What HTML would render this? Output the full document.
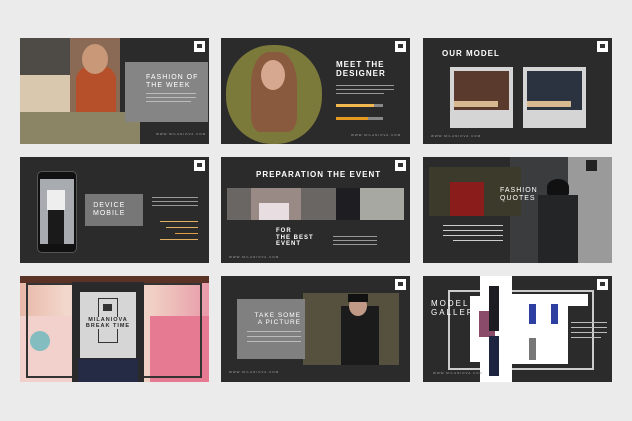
<!DOCTYPE html>
<html><head><meta charset="utf-8"><style>
*{margin:0;padding:0;box-sizing:border-box}
body{width:632px;height:421px;background:#ebebeb;position:relative;overflow:hidden;font-family:"Liberation Sans",sans-serif}
div{position:absolute}
.s{width:189px;height:106px;background:#2b2b2b;overflow:hidden}
.ic{width:11px;height:11px;background:#fff;top:3px;right:4px}
.ic:after{content:"";position:absolute;left:3px;top:3px;width:5px;height:4px;background:#333}
.t{color:#fff;font-weight:bold;letter-spacing:1px;line-height:1.1;white-space:nowrap}
.ln{height:1px;background:#999}
.url{color:#aaa;font-size:3px;letter-spacing:1px}
</style></head><body>

<!-- Slide 1 -->
<div class="s" style="left:20px;top:38px">
  <div style="left:0;top:0;width:50px;height:37px;background:#4e4a45"></div>
  <div style="left:0;top:37px;width:50px;height:37px;background:#d9c7ae"></div>
  <div style="left:50px;top:0;width:50px;height:74px;background:#8a6a55"></div>
  <div style="left:56px;top:28px;width:40px;height:46px;background:#b5502a;border-radius:14px 14px 0 0"></div>
  <div style="left:62px;top:6px;width:26px;height:30px;background:#c89878;border-radius:50%"></div>
  <div style="left:0;top:74px;width:120px;height:32px;background:#8b8566"></div>
  <div style="left:105px;top:24px;width:83px;height:60px;background:#858585"></div>
  <div class="t" style="left:126px;top:36px;font-size:7px;font-weight:normal">FASHION OF<br>THE WEEK</div>
  <div class="ln" style="left:126px;top:55px;width:50px;background:#bbb"></div>
  <div class="ln" style="left:126px;top:59px;width:50px;background:#bbb"></div>
  <div class="ln" style="left:126px;top:63px;width:45px;background:#bbb"></div>
  <div class="url" style="left:136px;top:94px">WWW.MILANIOVA.COM</div>
  <div class="ic"></div>
</div>

<!-- Slide 2 -->
<div class="s" style="left:221px;top:38px">
  <div style="left:5px;top:7px;width:96px;height:99px;background:#7c7a3a;border-radius:48%"></div>
  <div style="left:30px;top:14px;width:46px;height:80px;background:#8a5a3e;border-radius:40% 40% 20% 20%"></div>
  <div style="left:40px;top:22px;width:24px;height:30px;background:#d7a890;border-radius:50%"></div>
  <div class="t" style="left:115px;top:23px;font-size:8px">MEET THE<br>DESIGNER</div>
  <div class="ln" style="left:115px;top:47px;width:58px"></div>
  <div class="ln" style="left:115px;top:51px;width:58px"></div>
  <div class="ln" style="left:115px;top:55px;width:48px"></div>
  <div style="left:115px;top:66px;width:47px;height:3px;background:#888"></div>
  <div style="left:115px;top:66px;width:38px;height:3px;background:#f0b84e"></div>
  <div style="left:115px;top:79px;width:47px;height:3px;background:#888"></div>
  <div style="left:115px;top:79px;width:32px;height:3px;background:#e79a22"></div>
  <div class="url" style="left:130px;top:95px">WWW.MILANIOVA.COM</div>
  <div class="ic"></div>
</div>

<!-- Slide 3 -->
<div class="s" style="left:423px;top:38px">
  <div class="t" style="left:19px;top:12px;font-size:8px">OUR MODEL</div>
  <div style="left:27px;top:29px;width:63px;height:61px;background:#d5d5d5"></div>
  <div style="left:31px;top:33px;width:55px;height:39px;background:#5a3a2c"></div>
  <div style="left:31px;top:63px;width:44px;height:6px;background:#d8b890"></div>
  <div style="left:100px;top:29px;width:63px;height:61px;background:#d5d5d5"></div>
  <div style="left:104px;top:33px;width:55px;height:39px;background:#2c3340"></div>
  <div style="left:104px;top:63px;width:44px;height:6px;background:#d8b890"></div>
  <div class="url" style="left:8px;top:96px">WWW.MILANIOVA.COM</div>
  <div class="ic"></div>
</div>

<!-- Row 2 Slide 1 -->
<div class="s" style="left:20px;top:157px">
  <div style="left:17px;top:14px;width:40px;height:82px;background:#111;border:1px solid #555;border-radius:5px"></div>
  <div style="left:20px;top:22px;width:34px;height:65px;background:#a8abb0"></div>
  <div style="left:28px;top:40px;width:16px;height:47px;background:#1a1a1a"></div>
  <div style="left:27px;top:33px;width:18px;height:20px;background:#eee"></div>
  <div style="left:65px;top:37px;width:58px;height:32px;background:#777"></div>
  <div class="t" style="left:73px;top:45px;font-size:7px;font-weight:normal;text-align:center">DEVICE<br>MOBILE</div>
  <div class="ln" style="left:132px;top:40px;width:46px"></div>
  <div class="ln" style="left:132px;top:44px;width:46px"></div>
  <div class="ln" style="left:132px;top:48px;width:46px"></div>
  <div style="left:140px;top:64px;width:38px;height:1px;background:#e0b060"></div>
  <div style="left:146px;top:70px;width:32px;height:1px;background:#e0b060"></div>
  <div style="left:155px;top:76px;width:23px;height:1px;background:#e0a040"></div>
  <div style="left:140px;top:82px;width:38px;height:1px;background:#e0b060"></div>
  <div class="ic"></div>
</div>

<!-- Row 2 Slide 2 -->
<div class="s" style="left:221px;top:157px">
  <div class="t" style="left:35px;top:14px;font-size:8px">PREPARATION THE EVENT</div>
  <div style="left:6px;top:31px;width:177px;height:32px;background:#6a6664"></div>
  <div style="left:30px;top:31px;width:50px;height:32px;background:#9a8a85"></div>
  <div style="left:38px;top:46px;width:30px;height:17px;background:#e8dde0"></div>
  <div style="left:115px;top:31px;width:24px;height:32px;background:#1e1e22"></div>
  <div style="left:139px;top:31px;width:44px;height:32px;background:#a8a8a2"></div>
  <div class="t" style="left:55px;top:71px;font-size:6px">FOR<br>THE BEST<br>EVENT</div>
  <div class="ln" style="left:112px;top:79px;width:44px"></div>
  <div class="ln" style="left:112px;top:83px;width:44px"></div>
  <div class="ln" style="left:112px;top:87px;width:44px"></div>
  <div class="url" style="left:8px;top:98px">WWW.MILANIOVA.COM</div>
  <div class="ic"></div>
</div>

<!-- Row 2 Slide 3 -->
<div class="s" style="left:423px;top:157px">
  <div style="left:87px;top:0;width:102px;height:106px;background:#3a3c3e"></div>
  <div style="left:145px;top:0;width:44px;height:106px;background:#9a9a9a"></div>
  <div style="left:115px;top:38px;width:40px;height:68px;background:#232526"></div>
  <div style="left:124px;top:22px;width:22px;height:16px;background:#111;border-radius:50% 50% 10% 10%"></div>
  <div style="left:6px;top:10px;width:92px;height:49px;background:#3c3a2a"></div>
  <div style="left:27px;top:25px;width:34px;height:34px;background:#8a1c1c"></div>
  <div class="t" style="left:77px;top:30px;font-size:7px;font-weight:normal">FASHION<br>QUOTES</div>
  <div class="ln" style="left:20px;top:68px;width:60px;background:#ccc"></div>
  <div class="ln" style="left:20px;top:73px;width:60px;background:#ccc"></div>
  <div class="ln" style="left:20px;top:78px;width:60px;background:#ccc"></div>
  <div class="ln" style="left:30px;top:83px;width:50px;background:#ccc"></div>
  <div style="left:163px;top:3px;width:11px;height:11px;background:#222"></div>
</div>

<!-- Row 3 Slide 1 -->
<div class="s" style="left:20px;top:276px;background:#e9c4b2">
  <div style="left:0;top:0;width:189px;height:106px;background:linear-gradient(90deg,#e8b8a8 0,#f2d8cc 25%,#f0d0c4 70%,#e89aa8 100%)"></div>
  <div style="left:0;top:40px;width:55px;height:66px;background:#f2d0cc"></div>
  <div style="left:10px;top:55px;width:20px;height:20px;background:#3ab0b8;border-radius:50%;opacity:.6"></div>
  <div style="left:130px;top:40px;width:59px;height:66px;background:#e77a93"></div>
  <div style="left:0;top:0;width:189px;height:7px;background:#5a3326"></div>
  <div style="left:6px;top:7px;width:176px;height:95px;border:2px solid #333"></div>
  <div style="left:52px;top:6px;width:72px;height:100px;background:#2a2a2a"></div>
  <div style="left:60px;top:16px;width:56px;height:66px;background:#d6d6d6"></div>
  <div style="left:58px;top:83px;width:60px;height:23px;background:#252a45"></div>
  <div style="left:78px;top:22px;width:20px;height:45px;border:1px solid #333"></div>
  <div style="left:83px;top:28px;width:9px;height:7px;background:#333"></div>
  <div class="t" style="left:60px;top:41px;width:56px;text-align:center;font-size:5.5px;color:#2a2a2a;background:#d6d6d6">MILANIOVA<br>BREAK TIME</div>
</div>

<!-- Row 3 Slide 2 -->
<div class="s" style="left:221px;top:276px">
  <div style="left:82px;top:17px;width:96px;height:72px;background:#56503e"></div>
  <div style="left:120px;top:30px;width:38px;height:59px;background:#1b1b1b"></div>
  <div style="left:128px;top:20px;width:18px;height:20px;background:#c09a86;border-radius:50%"></div>
  <div style="left:127px;top:18px;width:20px;height:8px;background:#111"></div>
  <div style="left:16px;top:23px;width:68px;height:60px;background:#808080"></div>
  <div class="t" style="left:22px;top:36px;font-size:6.5px;font-weight:normal;text-align:right;width:58px">TAKE SOME<br>A PICTURE</div>
  <div class="ln" style="left:26px;top:55px;width:54px;background:#bbb"></div>
  <div class="ln" style="left:26px;top:60px;width:54px;background:#bbb"></div>
  <div class="ln" style="left:26px;top:65px;width:54px;background:#bbb"></div>
  <div class="url" style="left:8px;top:94px">WWW.MILANIOVA.COM</div>
  <div class="ic"></div>
</div>

<!-- Row 3 Slide 3 -->
<div class="s" style="left:423px;top:276px">
  <div style="left:25px;top:14px;width:146px;height:80px;border:2px solid #ccc"></div>
  <div style="left:57px;top:0;width:32px;height:106px;background:#fff"></div>
  <div style="left:47px;top:20px;width:42px;height:66px;background:#fff"></div>
  <div style="left:89px;top:18px;width:56px;height:70px;background:#fff"></div>
  <div style="left:89px;top:36px;width:16px;height:52px;background:#fff"></div>
  <div style="left:145px;top:18px;width:20px;height:12px;background:#fff"></div>
  <div style="left:56px;top:35px;width:16px;height:26px;background:#8a4a6a"></div>
  <div style="left:66px;top:10px;width:10px;height:45px;background:#1c1c22"></div>
  <div style="left:66px;top:60px;width:10px;height:40px;background:#1c2440"></div>
  <div style="left:106px;top:28px;width:7px;height:20px;background:#2d3fa0"></div>
  <div style="left:128px;top:28px;width:7px;height:20px;background:#2d3fa0"></div>
  <div style="left:106px;top:62px;width:7px;height:22px;background:#777"></div>
  <div class="t" style="left:8px;top:24px;font-size:8px;font-weight:normal;letter-spacing:2px">MODEL<br>GALLERY</div>
  <div class="ln" style="left:148px;top:46px;width:36px;background:#bbb"></div>
  <div class="ln" style="left:148px;top:51px;width:36px;background:#bbb"></div>
  <div class="ln" style="left:148px;top:56px;width:36px;background:#bbb"></div>
  <div class="ln" style="left:148px;top:61px;width:30px;background:#bbb"></div>
  <div class="url" style="left:10px;top:95px">WWW.MILANIOVA.COM</div>
  <div class="ic"></div>
</div>

</body></html>
